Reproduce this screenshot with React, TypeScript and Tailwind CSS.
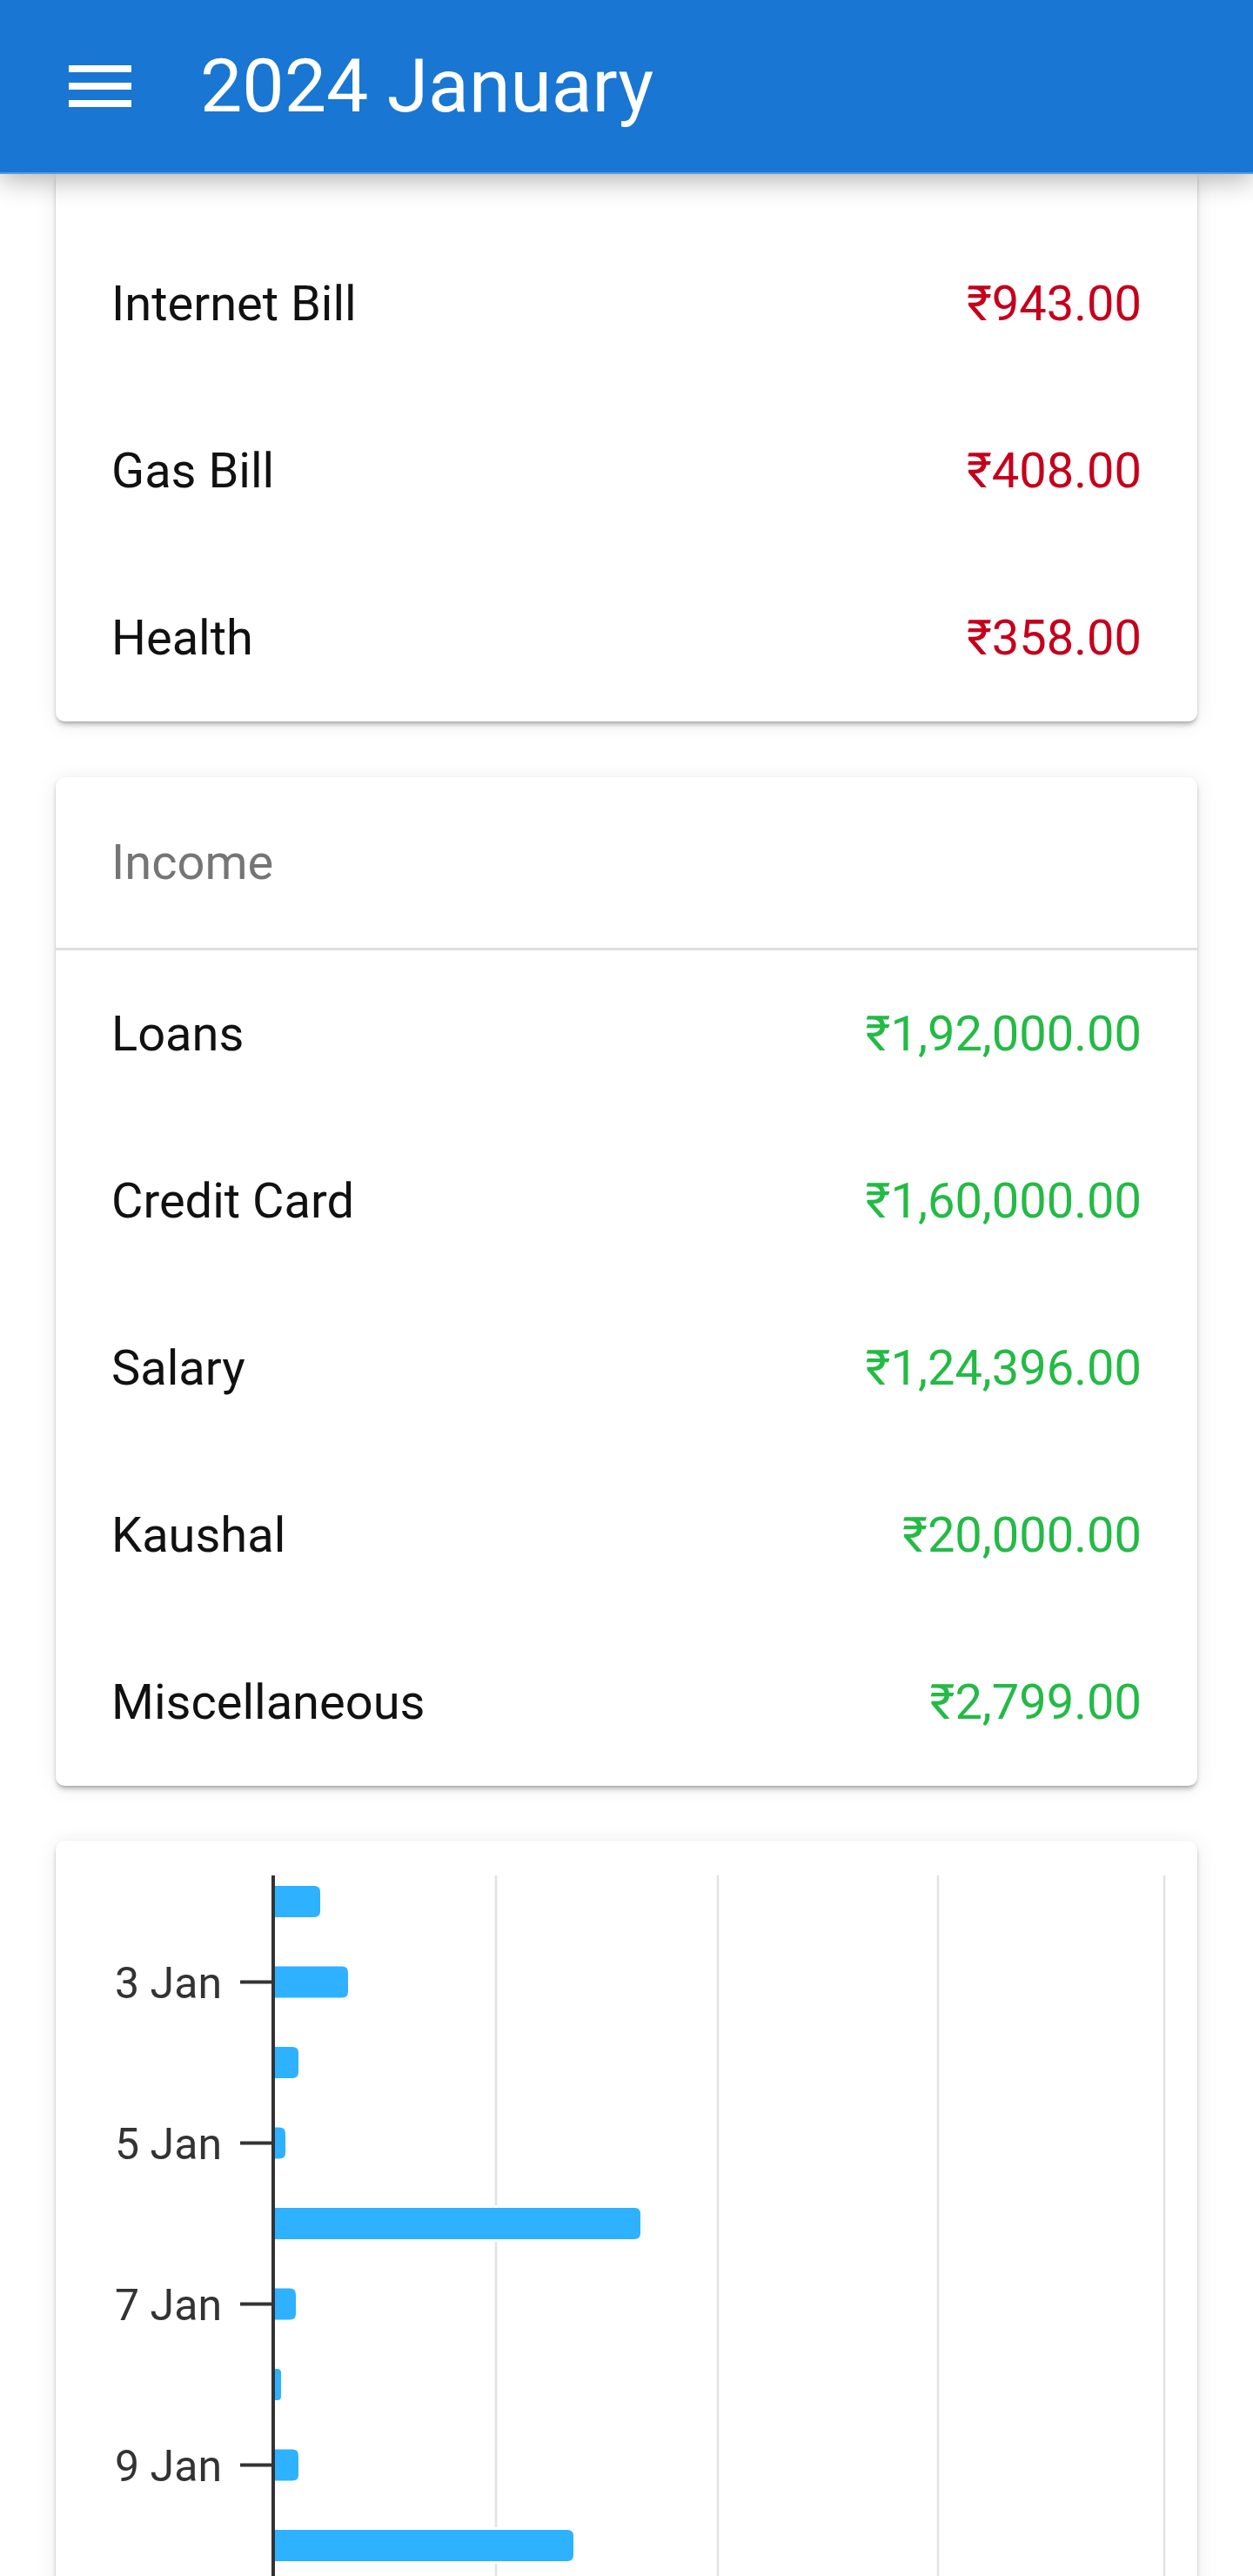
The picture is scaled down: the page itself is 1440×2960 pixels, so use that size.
import React from 'react';

interface Entry {
  label: string;
  amount: string;
}

const expenses: Entry[] = [
  { label: 'Internet Bill', amount: '₹943.00' },
  { label: 'Gas Bill', amount: '₹408.00' },
  { label: 'Health', amount: '₹358.00' },
];

const income: Entry[] = [
  { label: 'Loans', amount: '₹1,92,000.00' },
  { label: 'Credit Card', amount: '₹1,60,000.00' },
  { label: 'Salary', amount: '₹1,24,396.00' },
  { label: 'Kaushal', amount: '₹20,000.00' },
  { label: 'Miscellaneous', amount: '₹2,799.00' },
];

// bar end (x) in svg units, one per day starting at 2 Jan
const barEnds = [304, 336, 279, 264, 672, 276, 259, 279, 595];

const AXIS_X = 250;
const BAR_TOP = 52;
const BAR_STEP = 92.5;
const BAR_H = 36;
const gridXs = [506, 761, 1014, 1274];

const cardShadow =
  'shadow-[0_5px_6px_-2px_rgba(0,0,0,0.28),0_1px_3px_rgba(0,0,0,0.12),0_2px_26px_rgba(0,0,0,0.08)]';

const Row: React.FC<{ entry: Entry; color: string }> = ({ entry, color }) => (
  <div className="h-[192px] px-16 flex items-center justify-between text-[56px] leading-none">
    <span className="text-[#111]">{entry.label}</span>
    <span className={color}>{entry.amount}</span>
  </div>
);

const barPath = (x1: number, y: number, x2: number, h: number) => {
  const r = Math.min(7, (x2 - x1) / 2);
  return `M${x1} ${y} H${x2 - r} Q${x2} ${y} ${x2} ${y + r} V${y + h - r} Q${x2} ${y + h} ${x2 - r} ${y + h} H${x1} Z`;
};

const Chart: React.FC = () => {
  const height = 900;
  return (
    <svg width="1312" height={height} viewBox={`0 0 1312 ${height}`} className="block">
      {gridXs.map((x) => (
        <line key={x} x1={x} y1={40} x2={x} y2={height} stroke="#e2e2e2" strokeWidth={2.5} />
      ))}
      {barEnds.map((end, i) => {
        const y = BAR_TOP + i * BAR_STEP;
        return (
          <path
            key={i}
            d={barPath(AXIS_X, y, end, BAR_H)}
            fill="#2eb1ff"
            stroke="#ffffff"
            strokeWidth={6}
            paintOrder="stroke"
          />
        );
      })}
      {barEnds.map((_, i) => {
        if (i % 2 === 0) return null;
        const cy = BAR_TOP + i * BAR_STEP + BAR_H / 2;
        return (
          <g key={`t${i}`}>
            <line x1={212} y1={cy} x2={AXIS_X} y2={cy} stroke="#333" strokeWidth={4} />
            <text
              x={191}
              y={cy + 18}
              textAnchor="end"
              fontSize={50}
              fill="#333"
              style={{ fontFamily: 'Roboto, sans-serif' }}
            >
              {`${i + 2} Jan`}
            </text>
          </g>
        );
      })}
      <line x1={AXIS_X} y1={40} x2={AXIS_X} y2={height} stroke="#333" strokeWidth={4} />
    </svg>
  );
};

export default function App() {
  return (
    <div className="w-[1440px] bg-white font-['Roboto',sans-serif]">
      {/* App bar */}
      <header className="relative z-10 h-[200px] bg-[#1976d2] flex items-center shadow-[0_6px_30px_rgba(0,0,0,0.32)] border-b-2 border-[#5a9ae2]">
        <div className="ml-[79px] w-[72px] flex flex-col gap-[12px]">
          <span className="block h-[8px] bg-white" />
          <span className="block h-[8px] bg-white" />
          <span className="block h-[8px] bg-white" />
        </div>
        <h1 className="ml-[79px] text-white text-[86px] leading-none font-normal">2024 January</h1>
      </header>

      <main className="px-16">
        {/* Expenses card (scrolled, top hidden under bar) */}
        <section className={`bg-white rounded-b-[10px] ${cardShadow}`}>
          <div className="h-[53px]" />
          {expenses.map((e) => (
            <Row key={e.label} entry={e} color="text-[#c5001c]" />
          ))}
        </section>

        {/* Income card */}
        <section className={`mt-[64px] bg-white rounded-[10px] ${cardShadow}`}>
          <div className="h-[199px] px-16 flex items-center border-b-[3px] border-[#e0e0e0]">
            <span className="text-[56px] leading-none text-[#757575]">Income</span>
          </div>
          {income.map((e) => (
            <Row key={e.label} entry={e} color="text-[#24ba46]" />
          ))}
        </section>

        {/* Daily chart card */}
        <section className={`mt-[63px] bg-white rounded-[10px] overflow-hidden ${cardShadow}`}>
          <Chart />
        </section>
      </main>
    </div>
  );
}
